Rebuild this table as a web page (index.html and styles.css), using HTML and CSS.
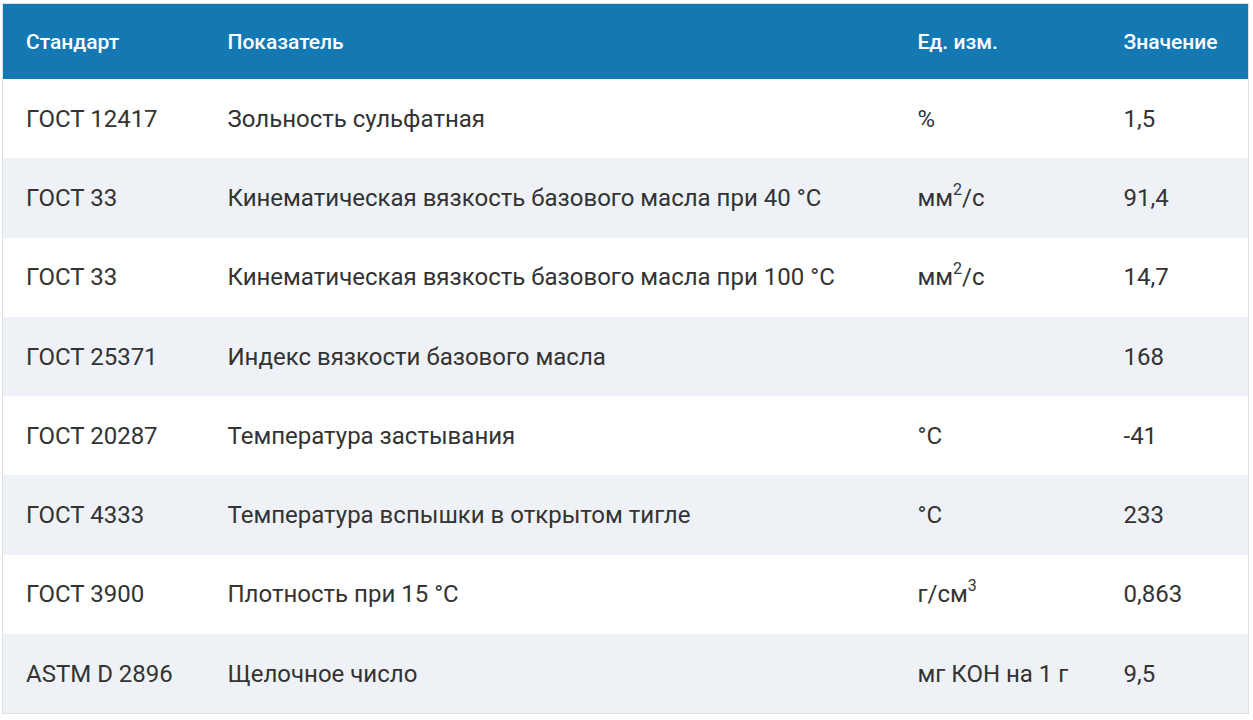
FILE: index.html
```html
<!DOCTYPE html>
<html lang="ru">
<head>
<meta charset="utf-8">
<link rel="stylesheet" href="styles.css">
</head>
<body>
<div class="wrap">
<table class="spec">
  <colgroup>
    <col class="c1"><col class="c2"><col class="c3"><col class="c4">
  </colgroup>
  <thead>
    <tr><th>Стандарт</th><th>Показатель</th><th>Ед. изм.</th><th>Значение</th></tr>
  </thead>
  <tbody>
    <tr><td>ГОСТ 12417</td><td>Зольность сульфатная</td><td>%</td><td>1,5</td></tr>
    <tr><td>ГОСТ 33</td><td>Кинематическая вязкость базового масла при 40 °С</td><td>мм<sup>2</sup>/с</td><td>91,4</td></tr>
    <tr><td>ГОСТ 33</td><td>Кинематическая вязкость базового масла при 100 °С</td><td>мм<sup>2</sup>/с</td><td>14,7</td></tr>
    <tr><td>ГОСТ 25371</td><td>Индекс вязкости базового масла</td><td></td><td>168</td></tr>
    <tr><td>ГОСТ 20287</td><td>Температура застывания</td><td>°С</td><td>-41</td></tr>
    <tr><td>ГОСТ 4333</td><td>Температура вспышки в открытом тигле</td><td>°С</td><td>233</td></tr>
    <tr><td>ГОСТ 3900</td><td>Плотность при 15 °С</td><td>г/см<sup>3</sup></td><td>0,863</td></tr>
    <tr><td>ASTM D 2896</td><td>Щелочное число</td><td>мг КОН на 1 г</td><td>9,5</td></tr>
  </tbody>
</table>
</div>
</body>
</html>
```
FILE: styles.css
```css
html, body {
  margin: 0;
  padding: 0;
  background: #ffffff;
}
body {
  font-family: Roboto, "Liberation Sans", sans-serif;
  color: #333333;
}
.wrap {
  padding: 3px 4px 0 2px;
}
.spec {
  width: 1247px;
  border-collapse: collapse;
  border: 1px solid #dcdfe3;
  table-layout: fixed;
}
.c1 { width: 202px; }
.c2 { width: 690px; }
.c3 { width: 206px; }
.c4 { width: auto; }
.spec th {
  background: #1479b2;
  color: #ffffff;
  font-weight: 500;
  font-size: 21px;
  text-align: left;
  height: 75px;
  padding: 0 0 0 23px;
}
.spec td {
  font-size: 24px;
  height: 79.3px;
  padding: 0 0 0 23px;
  vertical-align: middle;
}
.spec tbody tr:nth-child(even) td {
  background: #eef2f6;
}
.spec sup {
  font-size: 16px;
  line-height: 0;
  vertical-align: 11px;
}
```
